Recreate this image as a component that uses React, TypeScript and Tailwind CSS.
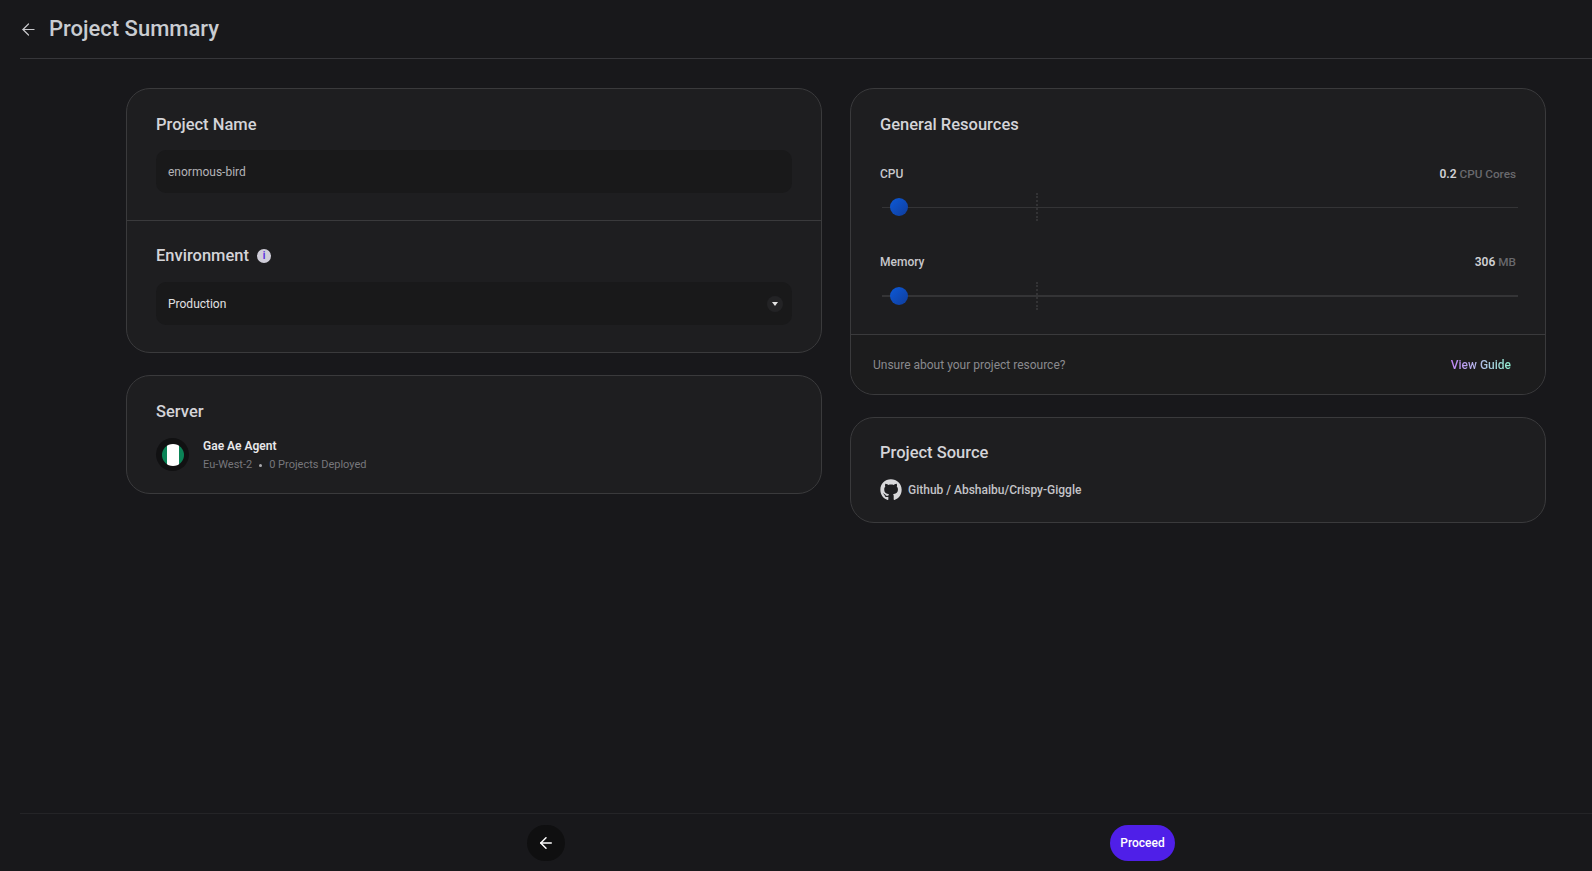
import { ArrowLeft } from 'lucide-react';
import { FaGithub } from 'react-icons/fa';

const Slider = ({ heavy }: { heavy?: boolean }) => (
  <div className="relative ml-[2px] mr-[-2px] flex h-7 items-center">
    <div className={`w-full bg-[#343436] ${heavy ? 'h-[2px]' : 'h-px'}`} />
    <div className="absolute left-[154px] top-0 h-7 border-l-2 border-dotted border-[#333335]" />
    <div className="absolute left-[8px] size-[18px] rounded-full bg-gradient-to-br from-[#0b5ad9] to-[#0f3d9c]" />
  </div>
);

export default function App() {
  return (
    <div className="flex h-screen flex-col overflow-hidden bg-[#18181b] font-['Roboto',sans-serif]">
      {/* Header */}
      <div className="ml-5 flex h-[59px] shrink-0 items-center gap-[11px] border-b border-[#36363a]">
        <ArrowLeft size={19} strokeWidth={1.5} className="-ml-px text-[#c8c8cc]" />
        <h1 className="text-[22px] font-medium leading-8 text-[#c9ccd1]">Project Summary</h1>
      </div>

      {/* Cards */}
      <div className="grid grid-cols-2 items-start gap-7 pl-[126px] pr-[46px] pt-[29px]">
        <div className="flex flex-col gap-[22px]">
          <div className="rounded-[24px] border border-[#3a3a3c] bg-[#1e1e20]">
            <div className="border-b border-[#3a3a3c] px-[29px] pb-[27px] pt-6">
              <h2 className="mb-[13px] text-[16.5px] font-medium leading-6 text-[#d4d4d8]">Project Name</h2>
              <div className="flex h-[43px] items-center rounded-[10px] bg-[#19191a] px-3 text-[12px] text-[#b4b4b8]">enormous-bird</div>
            </div>
            <div className="px-[29px] pb-[27px] pt-[23px]">
              <div className="mb-[14px] flex items-center gap-[8px]">
                <h2 className="text-[16.5px] font-medium leading-6 text-[#d4d4d8]">Environment</h2>
                <span className="flex size-[14px] items-center justify-center rounded-full bg-[#cfcdd8] text-[10px] font-bold leading-none text-[#5b30e0]">i</span>
              </div>
              <div className="flex h-[43px] items-center justify-between rounded-[10px] bg-[#19191a] pl-3 pr-[9px] text-[12px] text-[#e0e0e2]">
                <span>Production</span>
                <span className="flex size-4 items-center justify-center rounded-full bg-[#232325]">
                  <span className="mt-[1px] border-x-[3.5px] border-t-[4px] border-x-transparent border-t-[#e4e4e4]" />
                </span>
              </div>
            </div>
          </div>

          <div className="rounded-[24px] border border-[#3a3a3c] bg-[#1e1e20] px-[29px] pb-[19px] pt-6">
            <h2 className="mb-[13px] text-[16.5px] font-medium leading-6 text-[#d4d4d8]">Server</h2>
            <div className="flex items-start gap-[14px]">
              <div className="mt-px flex size-[33px] items-center justify-center rounded-full bg-[#111112]">
                <div className="flex size-[22px] overflow-hidden rounded-full">
                  <span className="h-full w-[5px] bg-[#0b8457]" />
                  <span className="h-full flex-1 bg-white" />
                  <span className="h-full w-[5px] bg-[#0b8457]" />
                </div>
              </div>
              <div>
                <p className="text-[12px] font-semibold leading-[18px] text-[#e8e8ea]">Gae Ae Agent</p>
                <p className="flex items-center pt-px text-[11px] leading-[18px] text-[#77777c]">
                  Eu-West-2
                  <span className="mx-[7px] size-[3px] rounded-full bg-[#aaaaae]" />
                  0 Projects Deployed
                </p>
              </div>
            </div>
          </div>
        </div>

        <div className="flex flex-col gap-[22px]">
          <div className="rounded-[24px] border border-[#3a3a3c] bg-[#1e1e20]">
            <div className="border-b border-[#3a3a3c] px-[29px] pb-6 pt-6">
              <h2 className="mb-[27px] text-[16.5px] font-medium leading-6 text-[#d4d4d8]">General Resources</h2>
              <div className="mb-[9px] flex justify-between text-[12px] font-medium leading-5 text-[#c8c8cc]">
                <span>CPU</span>
                <span>
                  <span className="font-semibold text-[#d0d0d4]">0.2</span> <span className="text-[11.75px] text-[#69696d]">CPU Cores</span>
                </span>
              </div>
              <Slider />
              <div className="mb-[10px] mt-[31px] flex justify-between text-[12px] font-medium leading-5 text-[#c8c8cc]">
                <span>Memory</span>
                <span>
                  <span className="font-semibold text-[#d0d0d4]">306</span> <span className="text-[11.75px] text-[#69696d]">MB</span>
                </span>
              </div>
              <Slider heavy />
            </div>
            <div className="flex h-[59px] items-center justify-between rounded-b-[24px] bg-[#1c1c1d] pl-[22px] pr-[34px]">
              <span className="text-[12px] text-[#8a8a8e]">Unsure about your project resource?</span>
              <span className="bg-gradient-to-r from-[#c084f5] to-[#8ef0d0] bg-clip-text text-[12px] font-medium text-transparent">View Guide</span>
            </div>
          </div>

          <div className="rounded-[24px] border border-[#3a3a3c] bg-[#1e1e20] px-[29px] pb-[21px] pt-[23px]">
            <h2 className="mb-[14px] text-[16.5px] font-medium leading-6 text-[#d4d4d8]">Project Source</h2>
            <div className="flex items-center gap-[6px]">
              <FaGithub size={22} className="text-[#d8d8da]" />
              <span className="text-[12px] font-medium text-[#c4c4c8]">Github / Abshaibu/Crispy-Giggle</span>
            </div>
          </div>
        </div>
      </div>

      {/* Footer */}
      <div className="ml-5 mt-auto flex h-[58px] shrink-0 items-center justify-between border-t border-[#242427] pl-[507px] pr-[417px]">
        <button className="flex h-9 w-[38px] items-center justify-center rounded-full bg-[#0f0f10] text-white">
          <ArrowLeft size={18} />
        </button>
        <button className="h-9 w-[65px] rounded-full bg-[#4f1fe8] text-[12px] font-medium text-white">Proceed</button>
      </div>
    </div>
  );
}
